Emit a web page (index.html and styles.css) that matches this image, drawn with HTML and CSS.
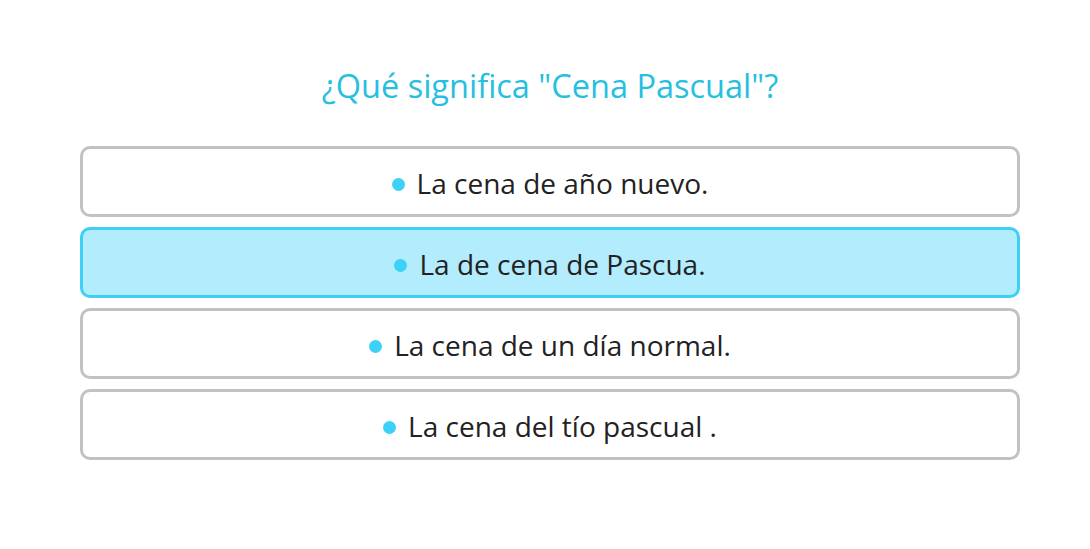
FILE: index.html
```html
<!DOCTYPE html>
<html lang="es">
<head>
<meta charset="utf-8">
<title>Quiz</title>
<link rel="stylesheet" href="styles.css">
</head>
<body>
<main class="quiz">
  <h1 class="question">¿Qué significa "Cena Pascual"?</h1>
  <ul class="options">
    <li class="option"><span class="dot"></span>La cena de año nuevo.</li>
    <li class="option selected"><span class="dot"></span>La de cena de Pascua.</li>
    <li class="option"><span class="dot"></span>La cena de un día normal.</li>
    <li class="option"><span class="dot"></span>La cena del tío pascual .</li>
  </ul>
</main>
</body>
</html>
```
FILE: styles.css
```css
html, body {
  margin: 0;
  padding: 0;
  background: #ffffff;
}
body {
  font-family: "Open Sans", "Noto Sans", sans-serif;
}
.quiz {
  width: 940px;
  margin-left: 80px;
  padding-top: 62px;
}
.question {
  margin: 0 0 36px 0;
  text-align: center;
  font-weight: 400;
  font-size: 32.5px;
  line-height: 48px;
  color: #26bfdf;
}
.options {
  list-style: none;
  margin: 0;
  padding: 0;
  display: flex;
  flex-direction: column;
  gap: 10px;
}
.option {
  box-sizing: border-box;
  height: 71px;
  padding-top: 3px;
  border: 3px solid #c2c2c2;
  border-radius: 10px;
  background: #fff;
  display: flex;
  align-items: center;
  justify-content: center;
  gap: 12px;
  font-size: 28px;
  color: #222;
}
.option.selected {
  background: #b3ecfd;
  border-color: #3dd0f5;
}
.dot {
  width: 13px;
  height: 13px;
  border-radius: 50%;
  background: #3cd1f7;
  flex: none;
  margin-top: 2px;
}
```
